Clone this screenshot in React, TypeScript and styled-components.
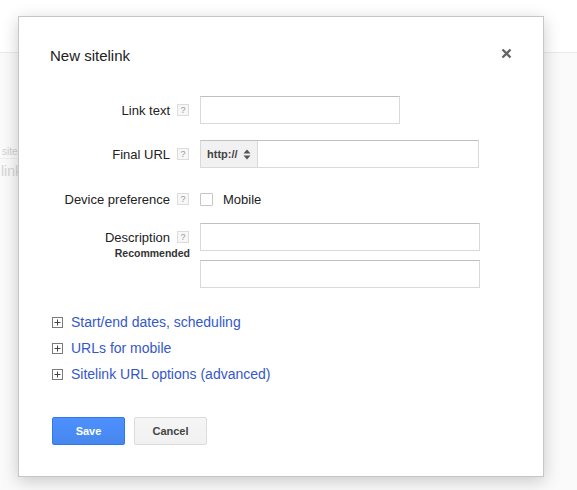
import React from "react";
import styled, { createGlobalStyle } from "styled-components";

const Global = createGlobalStyle`
  html, body { margin: 0; padding: 0; }
  body {
    font-family: "Liberation Sans", Arial, sans-serif;
    background: #fafafa;
    width: 577px;
    height: 490px;
    overflow: hidden;
  }
  * { box-sizing: border-box; }
`;

const Page = styled.div`
  position: relative;
  width: 577px;
  height: 490px;
  display: flex;
  flex-direction: column;
`;

const PageHeader = styled.div`
  height: 53px;
  background: #ffffff;
  border-bottom: 1px solid #ebebeb;
  flex: none;
`;

const PageBody = styled.div`
  flex: 1;
  background: #fafafa;
  display: flex;
  flex-direction: column;
  padding-top: 92px;
`;

const BgSmall = styled.div`
  font-size: 10px;
  color: #cfcfcf;
  padding-left: 2px;
  height: 14px;
  line-height: 14px;
  white-space: nowrap;
  border-bottom: 1px solid #efefef;
  width: 30px;
`;

const BgLarge = styled.div`
  font-size: 14px;
  color: #d4d4d4;
  padding-left: 1px;
  margin-top: 3px;
  line-height: 18px;
  white-space: nowrap;
`;

const Dialog = styled.div`
  position: absolute;
  left: 18px;
  top: 16px;
  width: 526px;
  background: #ffffff;
  border: 1px solid #c6c6c6;
  box-shadow: 0 4px 16px rgba(0, 0, 0, 0.2);
  padding: 29px 31px 31px 31px;
`;

const Header = styled.div`
  display: flex;
  justify-content: space-between;
  align-items: flex-start;
  height: 18px;
  padding-top: 1px;
`;

const Title = styled.div`
  font-size: 15px;
  color: #222;
  line-height: 18px;
`;

const CloseBtn = styled.div`
  width: 11px;
  height: 11px;
  display: flex;
  align-items: center;
  justify-content: center;
  margin-top: 1px;
  cursor: pointer;
`;

const Form = styled.div`
  margin-top: 32px;
  display: flex;
  flex-direction: column;
`;

const Row = styled.div<{ $mt?: number }>`
  display: grid;
  grid-template-columns: 140px 1fr;
  column-gap: 10px;
  margin-top: ${(p) => p.$mt ?? 0}px;
`;

const LabelCell = styled.div`
  display: flex;
  flex-direction: column;
  align-items: flex-end;
`;

const LabelLine = styled.div`
  height: 28px;
  display: flex;
  align-items: center;
  gap: 7px;
  font-size: 13px;
  color: #222;
  white-space: nowrap;
`;

const SubLabel = styled.div`
  font-size: 10.5px;
  font-weight: bold;
  color: #333;
  line-height: 12px;
  margin-top: -4px;
`;

const Help = styled.span`
  width: 12px;
  height: 12px;
  border: 1px solid #dcdcdc;
  background: #f7f7f7;
  color: #999;
  font-size: 9px;
  line-height: 10px;
  display: inline-flex;
  align-items: center;
  justify-content: center;
  margin-right: 1px;
`;

const FieldCol = styled.div`
  display: flex;
  flex-direction: column;
  gap: 9px;
`;

const TextInput = styled.div<{ $w: number }>`
  width: ${(p) => p.$w}px;
  height: 28px;
  border: 1px solid #d9d9d9;
  border-top-color: #c0c0c0;
  background: #fff;
`;

const UrlGroup = styled.div`
  width: 279px;
  height: 28px;
  border: 1px solid #d9d9d9;
  border-top-color: #c0c0c0;
  display: flex;
  background: #fff;
`;

const Proto = styled.div`
  width: 57px;
  background: #f1f1f1;
  border-right: 1px solid #d9d9d9;
  display: flex;
  align-items: center;
  padding-left: 6px;
  gap: 5px;
  font-size: 11px;
  font-weight: bold;
  color: #444;
`;

const CheckRow = styled.div`
  height: 28px;
  display: flex;
  align-items: center;
  gap: 10px;
  font-size: 13px;
  color: #222;
`;

const Checkbox = styled.span`
  width: 13px;
  height: 13px;
  border: 1px solid #c6c6c6;
  border-radius: 1px;
  background: #fff;
  margin-top: 1px;
`;

const Expanders = styled.div`
  margin-top: 21px;
  display: flex;
  flex-direction: column;
`;

const ExpandRow = styled.div`
  height: 26px;
  display: flex;
  align-items: center;
  gap: 8px;
  padding-left: 2px;
`;

const PlusBox = styled.span`
  width: 11px;
  height: 11px;
  display: inline-flex;
`;

const LinkText = styled.a`
  font-size: 14px;
  color: #3558c9;
  text-decoration: none;
  cursor: pointer;
`;

const Buttons = styled.div`
  margin-top: 30px;
  display: flex;
  gap: 9px;
  padding-left: 2px;
`;

const Button = styled.button<{ $primary?: boolean }>`
  width: 73px;
  height: 28px;
  border-radius: 2px;
  font-family: "Liberation Sans", Arial, sans-serif;
  font-size: 11px;
  font-weight: bold;
  padding: 0;
  cursor: pointer;
  border: 1px solid ${(p) => (p.$primary ? "#3079ed" : "#dcdcdc")};
  background: ${(p) =>
    p.$primary
      ? "linear-gradient(#4d90fe, #4787ed)"
      : "linear-gradient(#f5f5f5, #f1f1f1)"};
  color: ${(p) => (p.$primary ? "#fff" : "#444")};
`;

const HelpIcon = () => <Help>?</Help>;

const Plus = () => (
  <PlusBox>
    <svg width="11" height="11" viewBox="0 0 11 11">
      <rect x="0.5" y="0.5" width="10" height="10" fill="#fff" stroke="#7a7a7a" />
      <line x1="2.5" y1="5.5" x2="8.5" y2="5.5" stroke="#444" />
      <line x1="5.5" y1="2.5" x2="5.5" y2="8.5" stroke="#444" />
    </svg>
  </PlusBox>
);

const Arrows = () => (
  <svg width="8" height="11" viewBox="0 0 8 11">
    <path d="M4 0.5 L7.5 4.5 H0.5 Z" fill="#555" />
    <path d="M4 10.5 L7.5 6.5 H0.5 Z" fill="#555" />
  </svg>
);

const CloseIcon = () => (
  <svg width="11" height="11" viewBox="0 0 11 11">
    <path d="M1.5 1.5 L9.5 9.5 M9.5 1.5 L1.5 9.5" stroke="#666" strokeWidth="2.4" />
  </svg>
);

export default function App() {
  return (
    <>
      <Global />
      <Page>
        <PageHeader />
        <PageBody>
          <BgSmall>site</BgSmall>
          <BgLarge>link</BgLarge>
        </PageBody>
        <Dialog>
          <Header>
            <Title>New sitelink</Title>
            <CloseBtn>
              <CloseIcon />
            </CloseBtn>
          </Header>
          <Form>
            <Row>
              <LabelCell>
                <LabelLine>
                  Link text <HelpIcon />
                </LabelLine>
              </LabelCell>
              <FieldCol>
                <TextInput $w={200} />
              </FieldCol>
            </Row>
            <Row $mt={16}>
              <LabelCell>
                <LabelLine>
                  Final URL <HelpIcon />
                </LabelLine>
              </LabelCell>
              <FieldCol>
                <UrlGroup>
                  <Proto>
                    http:// <Arrows />
                  </Proto>
                </UrlGroup>
              </FieldCol>
            </Row>
            <Row $mt={17}>
              <LabelCell>
                <LabelLine>
                  Device preference <HelpIcon />
                </LabelLine>
              </LabelCell>
              <CheckRow>
                <Checkbox />
                Mobile
              </CheckRow>
            </Row>
            <Row $mt={10}>
              <LabelCell>
                <LabelLine>
                  Description <HelpIcon />
                </LabelLine>
                <SubLabel>Recommended</SubLabel>
              </LabelCell>
              <FieldCol>
                <TextInput $w={280} />
                <TextInput $w={280} />
              </FieldCol>
            </Row>
          </Form>
          <Expanders>
            <ExpandRow>
              <Plus />
              <LinkText>Start/end dates, scheduling</LinkText>
            </ExpandRow>
            <ExpandRow>
              <Plus />
              <LinkText>URLs for mobile</LinkText>
            </ExpandRow>
            <ExpandRow>
              <Plus />
              <LinkText>Sitelink URL options (advanced)</LinkText>
            </ExpandRow>
          </Expanders>
          <Buttons>
            <Button $primary>Save</Button>
            <Button>Cancel</Button>
          </Buttons>
        </Dialog>
      </Page>
    </>
  );
}
